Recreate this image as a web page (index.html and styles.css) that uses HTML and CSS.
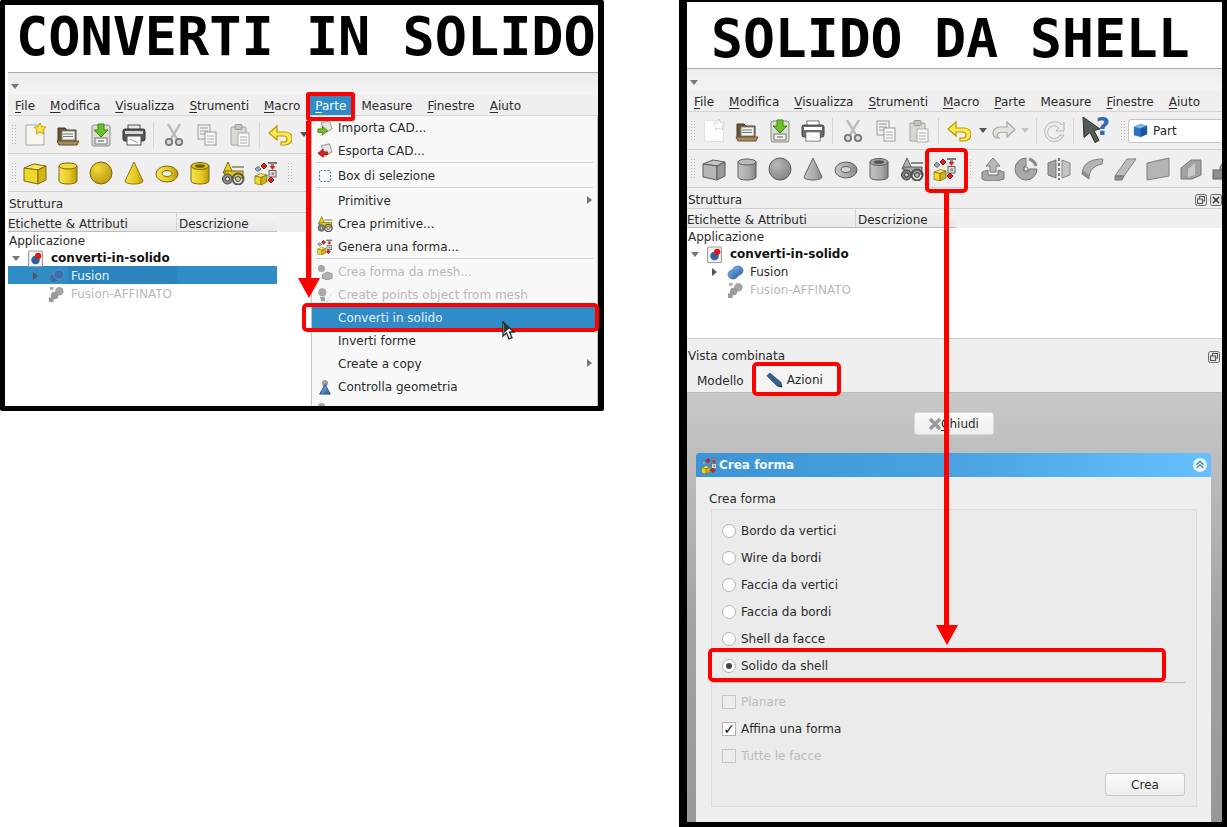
FILE: index.html
```html
<!DOCTYPE html>
<html lang="it">
<head>
<meta charset="utf-8">
<title>Converti in solido / Solido da shell</title>
<link rel="stylesheet" href="styles.css">
</head>
<body>
<svg class="defs" aria-hidden="true">
  <defs>
    <linearGradient id="gy" x1="0" x2="1" y1="0" y2="0"><stop offset="0" stop-color="#f7e45a"/><stop offset=".6" stop-color="#e6c81c"/><stop offset="1" stop-color="#b8980f"/></linearGradient>
    <radialGradient id="gs" cx=".35" cy=".3" r=".8"><stop offset="0" stop-color="#f4d93a"/><stop offset="1" stop-color="#b5950f"/></radialGradient>
    <linearGradient id="gb" x1="0" x2="1" y1="0" y2="1"><stop offset="0" stop-color="#7fb0e6"/><stop offset="1" stop-color="#2c62a8"/></linearGradient>
    <symbol id="i-new" viewBox="0 0 24 24"><path d="M3 2h13l5 5v15H3z" fill="#f6f5ef" stroke="#a9a79d"/><path d="M17 0l1.800 3.600 4 .5-2.900 2.800.7 4L17 9l-3.600 1.900.7-4-2.900-2.800 4-.5z" fill="#fce94f" stroke="#c4a000"/></symbol>
    <symbol id="i-open" viewBox="0 0 24 24"><path d="M2 5h7l2 2h9v13H2z" fill="#6b5232" stroke="#4a3820"/><rect x="6" y="8" width="13" height="9" fill="#f3f3ee" stroke="#888"/><path d="M7 11h10M7 13.500h10" stroke="#777"/><path d="M1 18h22l-2 4H3z" fill="#a58a5f" stroke="#6b5232"/></symbol>
    <symbol id="i-save" viewBox="0 0 24 24"><rect x="3" y="2" width="18" height="21" rx="2" fill="#dcdcd6" stroke="#8b8d85"/><rect x="6" y="15" width="12" height="6" fill="#f4f4f0" stroke="#777"/><path d="M9 18h6" stroke="#555"/><path d="M9 1h6v6h4l-7 7-7-7h4z" fill="#6cc02c" stroke="#3f8a0c"/></symbol>
    <symbol id="i-print" viewBox="0 0 24 24"><rect x="6" y="2" width="12" height="6" fill="#e8e8e8" stroke="#555"/><rect x="1" y="6" width="22" height="12" rx="2" fill="#55574f" stroke="#2e3436"/><rect x="3" y="8" width="18" height="3" fill="#d4d6d0"/><rect x="5" y="13" width="14" height="9" fill="#fafafa" stroke="#555"/><path d="M8 16l8 4" stroke="#7fb27f"/></symbol>
    <symbol id="i-cut" viewBox="0 0 24 24"><path d="M6 1l9 15M18 1L9 16" stroke="#b8bab4" stroke-width="2.400" fill="none"/><circle cx="7" cy="19" r="3.200" fill="#d8d8d8" stroke="#777" stroke-width="1.800"/><circle cx="17" cy="19" r="3.200" fill="#d8d8d8" stroke="#777" stroke-width="1.800"/></symbol>
    <symbol id="i-copy" viewBox="0 0 24 24"><rect x="3" y="2" width="12" height="14" fill="#f2f2ee" stroke="#999"/><path d="M5 5h8M5 8h8M5 11h8" stroke="#999"/><rect x="10" y="9" width="11" height="13" fill="#fafafa" stroke="#999"/><path d="M12 13h7M12 16h7M12 19h7" stroke="#aaa"/></symbol>
    <symbol id="i-paste" viewBox="0 0 24 24"><rect x="3" y="4" width="15" height="18" rx="1" fill="#d8d9d3" stroke="#a2a49c"/><rect x="7" y="1.500" width="7" height="5" rx="1" fill="#c4c5bf" stroke="#999"/><rect x="10" y="10" width="11" height="13" fill="#fbfbfb" stroke="#aaa"/><path d="M12 14h7M12 17h7M12 20h7" stroke="#aaa"/></symbol>
    <symbol id="i-undo" viewBox="0 0 24 24"><path d="M9 3L1 10l8 7v-4h6c3 0 4 1.500 4 3s-1 3-3 3h-3v3h4c4 0 7-3 7-6.500 0-4-3-6.500-7-6.500H9z" fill="#fce94f" stroke="#b89a00" stroke-width="1.200"/></symbol>
    <symbol id="i-redo" viewBox="0 0 24 24"><path d="M15 3l8 7.500L15 18v-4.500H9c-3 0-4 1.500-4 3s1 2.500 3 2.500H4C2 18 1 15.500 1 14c0-3.500 3-6 7-6h7z" fill="#e2e3df" stroke="#a8aaa4" stroke-width="1.200"/></symbol>
    <symbol id="i-refresh" viewBox="0 0 24 24"><path d="M19 6a10 10 0 1 0 2 10h-4a6.500 6.500 0 1 1-1-7l-3 3h8V3z" fill="#eeeeec" stroke="#b6b7b2"/></symbol>
    <symbol id="i-help" viewBox="0 0 30 30"><path d="M1 1l17 12-6 1.500 5 10-4 2-5-10-6 5z" fill="#555b57" stroke="#2e3436"/><text x="14" y="19" class="help-q">?</text></symbol>
    <symbol id="i-box" viewBox="0 0 24 24"><path d="M1 7l10-4 12 2-8 4z" fill="#f7e762" stroke="#7b6a0c"/><path d="M1 7l14 2v14L1 20z" fill="#efd62a" stroke="#7b6a0c"/><path d="M15 9l8-4v14l-8 4z" fill="#d2b514" stroke="#7b6a0c"/></symbol>
    <symbol id="i-cyl" viewBox="0 0 24 24"><path d="M3 5v15c0 4 18 4 18 0V5z" fill="url(#gy)" stroke="#7b6a0c"/><ellipse cx="12" cy="5" rx="9" ry="3" fill="#f3dc3c" stroke="#7b6a0c"/></symbol>
    <symbol id="i-sph" viewBox="0 0 24 24"><circle cx="12" cy="12" r="11" fill="url(#gs)" stroke="#7b6a0c"/></symbol>
    <symbol id="i-cone" viewBox="0 0 24 24"><path d="M12 1L3 20c0 4 18 4 18 0z" fill="url(#gy)" stroke="#8a7610"/></symbol>
    <symbol id="i-tor" viewBox="0 0 24 24"><ellipse cx="12" cy="13" rx="11" ry="8" fill="url(#gy)" stroke="#7b6a0c"/><ellipse cx="12" cy="12.500" rx="5" ry="3" fill="#f4f1d6" stroke="#7b6a0c"/></symbol>
    <symbol id="i-tube" viewBox="0 0 24 24"><path d="M3 5v15c0 4 18 4 18 0V5z" fill="url(#gy)" stroke="#7b6a0c"/><ellipse cx="12" cy="5" rx="9" ry="3.500" fill="#d9bd1c" stroke="#7b6a0c"/><ellipse cx="12" cy="5" rx="5" ry="1.800" fill="#6e5f10"/></symbol>
    <symbol id="i-prim" viewBox="0 0 24 24"><path d="M7 1L2 12h10z" fill="#eccf26" stroke="#7b6a0c"/><path d="M11 5h12v2H11z" fill="#9a9c96"/><rect x="4" y="10" width="18" height="7" fill="#e3c31a" stroke="#7b6a0c"/><circle cx="6.500" cy="18" r="5" fill="#8b8d88" stroke="#444"/><circle cx="6.500" cy="18" r="2" fill="#eee" stroke="#444"/><circle cx="17" cy="18" r="5.500" fill="none" stroke="#555" stroke-width="2"/><circle cx="17" cy="18" r="2.500" fill="#ccc" stroke="#444"/></symbol>
    <symbol id="i-build" viewBox="0 0 24 24"><path d="M1 15l6-2.500 6 1.500-6 2.500z" fill="#f8ea6a" stroke="#7b6a0c" stroke-width=".7"/><path d="M1 15l6 1.500V24l-6-1.500z" fill="#f0d82e" stroke="#7b6a0c" stroke-width=".7"/><path d="M7 16.500l6-2.500v7l-6 3z" fill="#cdb11a" stroke="#7b6a0c" stroke-width=".7"/><path d="M1 8l3-2.500L7 8l-3 2.500z" fill="#9ab0c9" stroke="#666"/><path d="M7 5l3-3 3 3-3 3z" fill="#e02020" stroke="#911"/><path d="M14 1h9v2h-9z" fill="#777"/><path d="M17 2h3v3h-3z" fill="#888"/><path d="M15.500 5h6l-3 4z" fill="#e02020"/><rect x="15" y="9.500" width="7" height="6.500" fill="#ddd" stroke="#666"/><rect x="17.500" y="11.500" width="2.500" height="2.500" fill="#888"/><path d="M14 19l3-3 3 3-3 3z" fill="#e02020" stroke="#911"/></symbol>
    <symbol id="i-extr" viewBox="0 0 24 24"><path d="M12 1l7 8h-4v6H9V9H5z" fill="#b9b9b9" stroke="#7a7a7a"/><path d="M1 15l6-2v5h10v-5l6 2v7l-8 2H6l-5-2z" fill="#a7a7a7" stroke="#777"/></symbol>
    <symbol id="i-rev" viewBox="0 0 24 24"><path d="M12 1a11 11 0 1 0 11 11H15a3 3 0 1 1-3-3z" fill="#a9a9a9" stroke="#777"/><path d="M15 2a10 10 0 0 1 7 7" fill="none" stroke="#888" stroke-width="3"/><circle cx="12" cy="12" r="2" fill="#eee" stroke="#777"/></symbol>
    <symbol id="i-mir" viewBox="0 0 24 24"><path d="M1 6l8-3v18l-8-3z" fill="#a4a4a4" stroke="#777"/><path d="M23 6l-8-3v18l8-3z" fill="#c4c4c4" stroke="#888"/><path d="M12 1v22" stroke="#777" stroke-width="2" stroke-dasharray="3 2"/></symbol>
    <symbol id="i-fil" viewBox="0 0 24 24"><path d="M23 2C12 2 3 5 2 17l7 5c0-8 4-13 13-15z" fill="#b4b4b4" stroke="#808080"/><path d="M2 17l7 5v-4l-7-5z" fill="#8e8e8e"/></symbol>
    <symbol id="i-cham" viewBox="0 0 24 24"><path d="M14 2h9L11 19H2z" fill="#bdbdbd" stroke="#808080"/><path d="M2 19h9l-2 4H2z" fill="#8e8e8e" stroke="#777"/></symbol>
    <symbol id="i-ruled" viewBox="0 0 24 24"><path d="M1 6l22-5v18L1 23z" fill="#b4b4b4" stroke="#808080"/></symbol>
    <symbol id="i-loft" viewBox="0 0 24 24"><path d="M2 11l10-8h10v15l-9 4H2z" fill="#a2a2a2" stroke="#777"/><path d="M9 12l7-6v12l-7 2z" fill="#c9c9c9"/></symbol>
    <symbol id="i-sweep" viewBox="0 0 24 24"><path d="M8 22V10l6-9h10v12H14v6z" fill="#a4a4a4" stroke="#777"/><rect x="1" y="13" width="10" height="9" fill="#8e8e8e" stroke="#666"/></symbol>
    <symbol id="i-imp" viewBox="0 0 18 18"><path d="M5 3l9-2 3 9-9 5z" fill="#e4e4e0" stroke="#8a8a85"/><path d="M1 10h5V7l6 5-6 5v-3H1z" fill="#78b828" stroke="#4e8a10"/></symbol>
    <symbol id="i-exp" viewBox="0 0 18 18"><path d="M5 3l9-2 3 9-9 5z" fill="#e4e4e0" stroke="#8a8a85"/><path d="M12 10H7V7l-6 4.500L7 16v-3h5z" fill="#e02020" stroke="#a01010"/></symbol>
    <symbol id="i-sel" viewBox="0 0 16 16"><rect x="2.500" y="2.500" width="11" height="11" rx="1" fill="none" stroke="#4a7fc0" stroke-width="1.200" stroke-dasharray="2 1.500"/></symbol>
    <symbol id="i-mesh" viewBox="0 0 18 18"><circle cx="5" cy="5" r="4" fill="#a6a6a6"/><path d="M6 12l5-3 6 2v5l-5 2-6-2z" fill="#b2b2b2" stroke="#909090"/></symbol>
    <symbol id="i-pts" viewBox="0 0 18 18"><circle cx="6" cy="6" r="4.500" fill="#a6a6a6"/><path d="M3 11h6v5H5z" fill="#a0a0a0"/><path d="M12 12h1M15 10h1M14 15h1M11 16h1" stroke="#bbb" stroke-width="1.500"/></symbol>
    <symbol id="i-chk" viewBox="0 0 18 18"><circle cx="9" cy="4.500" r="3.500" fill="#9a9fa8"/><path d="M9 6l6 11H3z" fill="url(#gb)" stroke="#2c4f85"/></symbol>
    <symbol id="i-doc" viewBox="0 0 16 16"><rect x="1.500" y="1" width="13" height="14.500" rx="1" fill="#f4f4f2" stroke="#9a9a9a"/><circle cx="8" cy="9.500" r="4" fill="#2d5f9e"/><circle cx="10.500" cy="5.500" r="3" fill="#e01818"/></symbol>
    <symbol id="i-fus" viewBox="0 0 18 18"><ellipse cx="6.500" cy="11" rx="5.500" ry="5" fill="url(#gb)" stroke="#3a6aa5" stroke-width=".6"/><ellipse cx="11.500" cy="7" rx="5.500" ry="5" fill="url(#gb)" stroke="#3a6aa5" stroke-width=".6"/></symbol>
    <symbol id="i-fus-sel" viewBox="0 0 18 18"><ellipse cx="6.500" cy="11" rx="5.500" ry="5" fill="#3a6fae" stroke="#6a99cc" stroke-width=".8"/><ellipse cx="11.500" cy="7" rx="5.500" ry="5" fill="#3a6fae" stroke="#6a99cc" stroke-width=".8"/></symbol>
    <symbol id="i-aff" viewBox="0 0 18 18"><rect x="2" y="1" width="4" height="3" fill="#aaa"/><circle cx="12" cy="5.500" r="4.500" fill="#a4a4a4"/><circle cx="7" cy="10" r="4" fill="#9a9a9a"/><rect x="1" y="12" width="5" height="5" fill="#999"/></symbol>
    <symbol id="i-part" viewBox="0 0 18 18"><path d="M2 5l7-3 7 2v9l-7 3-7-2z" fill="#2d72c4"/><path d="M2 5l7 2 7-3-7-2z" fill="#7db3ea"/><path d="M9 7l7-3v9l-7 3z" fill="#1c55a0"/></symbol>
    <symbol id="i-pencil" viewBox="0 0 18 18"><path d="M1 4l3-3 12 10 1 5-5-1z" fill="#34608f" stroke="#1e3f66" stroke-width=".7"/><path d="M14 15.500l2.500.7-.7-2.500z" fill="#222"/></symbol>
    <symbol id="i-float" viewBox="0 0 12 12"><rect x=".5" y=".5" width="11" height="11" rx="2" fill="#e4e4e4" stroke="#6c6c6c"/><rect x="4.500" y="2.500" width="5" height="4.500" fill="none" stroke="#555"/><rect x="2.500" y="5" width="5" height="4.500" fill="#e4e4e4" stroke="#555"/></symbol>
    <symbol id="i-close" viewBox="0 0 12 12"><rect x=".5" y=".5" width="11" height="11" rx="2" fill="#e4e4e4" stroke="#6c6c6c"/><path d="M3 3l6 6M9 3l-6 6" stroke="#333" stroke-width="1.500"/></symbol>
    <symbol id="i-x" viewBox="0 0 14 14"><path d="M2 2l10 10M12 2L2 12" stroke="#9a9a9a" stroke-width="3.400"/></symbol>
    <symbol id="i-chev" viewBox="0 0 14 14"><circle cx="7" cy="7" r="7" fill="#eef6fc"/><path d="M3.500 6.500L7 3.500l3.500 3M3.500 10L7 7l3.500 3" fill="none" stroke="#3f8ed0" stroke-width="1.500"/></symbol>
    <symbol id="i-cursor" viewBox="0 0 14 20"><path d="M1 1v14l3.500-3 2.500 6 3-1.300-2.500-5.700H12z" fill="#fff" stroke="#222" stroke-width="1.300"/><path d="M2 2v10l6-5z" fill="#333"/></symbol>
  </defs>
</svg>

<section class="shot shot-left">
  <h1 class="shot-title title-left">CONVERTI IN SOLIDO</h1>
  <div class="app app-left">
    <div class="collapse-bar"><span class="caret-down"></span></div>
    <nav class="menubar">
      <span class="menu-item"><u>F</u>ile</span><span class="menu-item"><u>M</u>odifica</span><span class="menu-item"><u>V</u>isualizza</span><span class="menu-item"><u>S</u>trumenti</span><span class="menu-item"><u>M</u>acro</span><span class="menu-item menu-active"><u>P</u>arte</span><span class="menu-item">Measure</span><span class="menu-item"><u>F</u>inestre</span><span class="menu-item"><u>A</u>iuto</span>
    </nav>
    <div class="toolbar">
      <span class="grip"></span>
      <span class="tool"><svg class="ic"><use href="#i-new"/></svg></span>
      <span class="tool"><svg class="ic"><use href="#i-open"/></svg></span>
      <span class="tool"><svg class="ic"><use href="#i-save"/></svg></span>
      <span class="tool"><svg class="ic"><use href="#i-print"/></svg></span>
      <span class="tool-sep"></span>
      <span class="tool"><svg class="ic"><use href="#i-cut"/></svg></span>
      <span class="tool"><svg class="ic"><use href="#i-copy"/></svg></span>
      <span class="tool"><svg class="ic"><use href="#i-paste"/></svg></span>
      <span class="tool-sep"></span>
      <span class="tool"><svg class="ic"><use href="#i-undo"/></svg></span>
      <span class="drop"></span>
    </div>
    <div class="toolbar">
      <span class="grip"></span>
      <span class="tool"><svg class="ic"><use href="#i-box"/></svg></span>
      <span class="tool"><svg class="ic"><use href="#i-cyl"/></svg></span>
      <span class="tool"><svg class="ic"><use href="#i-sph"/></svg></span>
      <span class="tool"><svg class="ic"><use href="#i-cone"/></svg></span>
      <span class="tool"><svg class="ic"><use href="#i-tor"/></svg></span>
      <span class="tool"><svg class="ic"><use href="#i-tube"/></svg></span>
      <span class="tool"><svg class="ic"><use href="#i-prim"/></svg></span>
      <span class="tool"><svg class="ic"><use href="#i-build"/></svg></span>
      <span class="grip grip-after"></span>
    </div>
    <div class="dock-title"><span>Struttura</span></div>
    <div class="tree-head"><span class="col col-label">Etichette &amp; Attributi</span><span class="col col-desc">Descrizione</span></div>
    <div class="tree tree-left">
      <div class="tree-row tree-root">Applicazione</div>
      <div class="tree-row tree-doc"><span class="twist-down"></span><svg class="ic-s"><use href="#i-doc"/></svg><b>converti-in-solido</b></div>
      <div class="tree-row tree-item tree-selected"><span class="twist-right"></span><svg class="ic-s"><use href="#i-fus-sel"/></svg><span class="cell-sel">Fusion</span></div>
      <div class="tree-row tree-item tree-muted"><span class="twist-none"></span><svg class="ic-s"><use href="#i-aff"/></svg><span>Fusion-AFFINATO</span></div>
    </div>
    <div class="popup">
      <div class="pop-row"><svg class="ic-m"><use href="#i-imp"/></svg>Importa CAD...</div>
      <div class="pop-row"><svg class="ic-m"><use href="#i-exp"/></svg>Esporta CAD...</div>
      <div class="pop-sep"></div>
      <div class="pop-row"><svg class="ic-m"><use href="#i-sel"/></svg>Box di selezione</div>
      <div class="pop-sep"></div>
      <div class="pop-row"><span class="ic-m"></span>Primitive<span class="sub-arrow"></span></div>
      <div class="pop-row"><svg class="ic-m"><use href="#i-prim"/></svg>Crea primitive...</div>
      <div class="pop-row"><svg class="ic-m"><use href="#i-build"/></svg>Genera una forma...</div>
      <div class="pop-sep"></div>
      <div class="pop-row pop-off"><svg class="ic-m"><use href="#i-mesh"/></svg>Crea forma da mesh...</div>
      <div class="pop-row pop-off"><svg class="ic-m"><use href="#i-pts"/></svg>Create points object from mesh</div>
      <div class="pop-row pop-on"><span class="ic-m"></span>Converti in solido</div>
      <div class="pop-row"><span class="ic-m"></span>Inverti forme</div>
      <div class="pop-row"><span class="ic-m"></span>Create a copy<span class="sub-arrow"></span></div>
      <div class="pop-row"><svg class="ic-m"><use href="#i-chk"/></svg>Controlla geometria</div>
      <div class="pop-row pop-off"><svg class="ic-m"><use href="#i-mesh"/></svg></div>
    </div>
  </div>
</section>

<section class="shot shot-right">
  <h1 class="shot-title title-right">SOLIDO DA SHELL</h1>
  <div class="app app-right">
    <div class="collapse-bar"><span class="caret-down"></span></div>
    <nav class="menubar">
      <span class="menu-item"><u>F</u>ile</span><span class="menu-item"><u>M</u>odifica</span><span class="menu-item"><u>V</u>isualizza</span><span class="menu-item"><u>S</u>trumenti</span><span class="menu-item"><u>M</u>acro</span><span class="menu-item"><u>P</u>arte</span><span class="menu-item">Measure</span><span class="menu-item"><u>F</u>inestre</span><span class="menu-item"><u>A</u>iuto</span>
    </nav>
    <div class="toolbar">
      <span class="grip"></span>
      <span class="tool off-light"><svg class="ic"><use href="#i-new"/></svg></span>
      <span class="tool"><svg class="ic"><use href="#i-open"/></svg></span>
      <span class="tool"><svg class="ic"><use href="#i-save"/></svg></span>
      <span class="tool off-light"><svg class="ic"><use href="#i-print"/></svg></span>
      <span class="tool-sep"></span>
      <span class="tool"><svg class="ic"><use href="#i-cut"/></svg></span>
      <span class="tool"><svg class="ic"><use href="#i-copy"/></svg></span>
      <span class="tool"><svg class="ic"><use href="#i-paste"/></svg></span>
      <span class="tool-sep"></span>
      <span class="tool"><svg class="ic"><use href="#i-undo"/></svg></span>
      <span class="drop"></span>
      <span class="tool tool-narrow"><svg class="ic"><use href="#i-redo"/></svg></span>
      <span class="drop drop-off"></span>
      <span class="tool-sep"></span>
      <span class="tool tool-refresh"><svg class="ic"><use href="#i-refresh"/></svg></span>
      <span class="tool-sep"></span>
      <span class="tool tool-help"><svg class="ic-l"><use href="#i-help"/></svg></span>
      <span class="grip grip-combo"></span>
      <span class="combo"><svg class="ic-s"><use href="#i-part"/></svg>Part</span>
    </div>
    <div class="toolbar">
      <span class="grip"></span>
      <span class="tool off"><svg class="ic"><use href="#i-box"/></svg></span>
      <span class="tool off"><svg class="ic"><use href="#i-cyl"/></svg></span>
      <span class="tool off"><svg class="ic"><use href="#i-sph"/></svg></span>
      <span class="tool off"><svg class="ic"><use href="#i-cone"/></svg></span>
      <span class="tool off"><svg class="ic"><use href="#i-tor"/></svg></span>
      <span class="tool off"><svg class="ic"><use href="#i-tube"/></svg></span>
      <span class="tool off"><svg class="ic"><use href="#i-prim"/></svg></span>
      <span class="tool"><svg class="ic"><use href="#i-build"/></svg></span>
      <span class="grip grip-after"></span>
      <span class="tool"><svg class="ic"><use href="#i-extr"/></svg></span>
      <span class="tool"><svg class="ic"><use href="#i-rev"/></svg></span>
      <span class="tool"><svg class="ic"><use href="#i-mir"/></svg></span>
      <span class="tool"><svg class="ic"><use href="#i-fil"/></svg></span>
      <span class="tool"><svg class="ic"><use href="#i-cham"/></svg></span>
      <span class="tool"><svg class="ic"><use href="#i-ruled"/></svg></span>
      <span class="tool"><svg class="ic"><use href="#i-loft"/></svg></span>
      <span class="tool"><svg class="ic"><use href="#i-sweep"/></svg></span>
    </div>
    <div class="dock-title"><span>Struttura</span><span class="dock-btns"><svg class="ic-xs"><use href="#i-float"/></svg><svg class="ic-xs"><use href="#i-close"/></svg></span></div>
    <div class="tree-head"><span class="col col-label">Etichette &amp; Attributi</span><span class="col col-desc">Descrizione</span></div>
    <div class="tree tree-right">
      <div class="tree-row tree-root">Applicazione</div>
      <div class="tree-row tree-doc"><span class="twist-down"></span><svg class="ic-s"><use href="#i-doc"/></svg><b>converti-in-solido</b></div>
      <div class="tree-row tree-item"><span class="twist-right"></span><svg class="ic-s"><use href="#i-fus"/></svg><span>Fusion</span></div>
      <div class="tree-row tree-item tree-muted"><span class="twist-none"></span><svg class="ic-s"><use href="#i-aff"/></svg><span>Fusion-AFFINATO</span></div>
    </div>
    <div class="combined-title"><span>Vista combinata</span><svg class="ic-xs"><use href="#i-float"/></svg></div>
    <div class="tabs">
      <span class="tab">Modello</span>
      <span class="tab tab-on"><svg class="ic-s"><use href="#i-pencil"/></svg>Azioni</span>
    </div>
    <div class="task-area">
      <div class="task-actions"><button class="btn btn-close" type="button"><svg class="ic-b"><use href="#i-x"/></svg><span><u>C</u>hiudi</span></button></div>
      <div class="task-box">
        <div class="task-head"><svg class="ic-s"><use href="#i-build"/></svg><b>Crea forma</b><svg class="ic-b chev"><use href="#i-chev"/></svg></div>
        <div class="task-body">
          <div class="group-label">Crea forma</div>
          <div class="group">
            <label class="opt"><span class="radio"></span>Bordo da vertici</label>
            <label class="opt"><span class="radio"></span>Wire da bordi</label>
            <label class="opt"><span class="radio"></span>Faccia da vertici</label>
            <label class="opt"><span class="radio"></span>Faccia da bordi</label>
            <label class="opt"><span class="radio"></span>Shell da facce</label>
            <label class="opt"><span class="radio radio-on"></span>Solido da shell</label>
            <div class="rule"></div>
            <label class="opt opt-check opt-off"><span class="check"></span>Planare</label>
            <label class="opt opt-check"><span class="check check-on">✓</span>Affina una forma</label>
            <label class="opt opt-check opt-off"><span class="check"></span>Tutte le facce</label>
            <div class="group-foot"><button class="btn btn-make" type="button">Crea</button></div>
          </div>
        </div>
      </div>
    </div>
  </div>
</section>

<div class="mark mark-parte"></div>
<div class="arrow arrow-left"><span class="arrow-shaft"></span><span class="arrow-head"></span></div>
<div class="mark mark-converti"></div>
<svg class="cursor"><use href="#i-cursor"/></svg>

<div class="mark mark-build"></div>
<div class="arrow arrow-right"><span class="arrow-shaft"></span><span class="arrow-head"></span></div>
<div class="mark mark-azioni"></div>
<div class="mark mark-solido"></div>
</body>
</html>
```

FILE: styles.css
```css
* { box-sizing: border-box; }
html, body { margin: 0; padding: 0; }
body {
  position: relative;
  width: 1227px;
  height: 827px;
  overflow: hidden;
  background: #fff;
  font: 12px "DejaVu Sans", sans-serif;
  color: #2a2a2a;
}
.defs { position: absolute; width: 0; height: 0; }
u { text-underline-offset: 2px; text-decoration-thickness: 1px; }

/* Two screenshots laid on a free canvas */
.shot {
  position: absolute;
  background: #fff;
  border-style: solid;
  border-color: #000;
  overflow: hidden;
  display: flex;
  flex-direction: column;
}
.shot-left { left: 0; top: 0; width: 604px; height: 411px; border-width: 5px 6px 5px 5px; border-radius: 2px; }
.shot-right { left: 679px; top: 0; width: 548px; height: 827px; border-width: 2px 5px 5px 8px; }

.shot-title {
  margin: 0;
  flex: none;
  font: bold 53px/1 "DejaVu Sans Mono", monospace;
  color: #000;
  white-space: pre;
  display: flex;
  align-items: center;
}
.title-left { height: 67px; padding: 0 0 4px 11px; font-size: 53.5px; }
.title-right { height: 66px; padding: 6px 0 0 24px; }

.app {
  position: relative;
  flex: 1;
  min-height: 0;
  display: flex;
  flex-direction: column;
  background: #efefef;
  border-top: 1px solid #aaa;
}
.app-left { margin-left: 3px; }

.collapse-bar { height: 22px; flex: none; background: linear-gradient(#ececec, #f4f4f4); padding: 11px 0 0 3px; }
.caret-down { display: block; width: 0; height: 0; border: 4px solid transparent; border-top: 5px solid #777; border-bottom: 0; }

.menubar { height: 21px; flex: none; display: flex; align-items: center; padding-top: 1px; border-bottom: 1px solid #d4d4d4; }
.menu-item { padding: 0 7px; margin-right: 1px; height: 19px; line-height: 20px; white-space: nowrap; }
.menu-active { background: #308cc6; color: #fff; }

.toolbar { height: 38px; flex: none; display: flex; align-items: center; padding-left: 3px; border-bottom: 1px solid #cfcfcf; white-space: nowrap; }
.grip { width: 5px; height: 22px; flex: none; margin-right: 2px; background: radial-gradient(circle, #b5b5b5 .7px, transparent 1px) 0 0 / 3px 3px; }
.grip-after { margin: 0 5px 0 5px; }
.grip-combo { margin: 0 3px 0 7px; }
.tool { width: 33px; height: 30px; flex: none; display: flex; align-items: center; justify-content: center; }
.tool-narrow { width: 26px; }
.tool-refresh { width: 30px; }
.tool-help { margin-left: 3px; }
.tool.off svg { filter: grayscale(1) brightness(.88); }
.tool.off-light svg { filter: grayscale(1) brightness(1.25); }
.tool-sep { width: 1px; height: 26px; flex: none; margin: 0 3px 0 3px; background: #d5d5d5; }
.drop { width: 0; height: 0; flex: none; margin: 0 4px; border: 4px solid transparent; border-top: 5px solid #555; border-bottom: 0; }
.drop-off { border-top-color: #c4c4c4; }
.ic { width: 24px; height: 24px; }
.ic-l { width: 30px; height: 30px; }
.ic-s { width: 17px; height: 17px; flex: none; }
.ic-m { width: 16px; height: 16px; flex: none; display: block; }
.ic-xs { width: 12px; height: 12px; flex: none; display: block; }
.ic-b { width: 14px; height: 14px; flex: none; }
.help-q { font: bold 24px "DejaVu Sans", sans-serif; fill: #2f6cb3; }

.combo { width: 100px; height: 24px; flex: none; display: flex; align-items: center; gap: 4px; padding-left: 3px; background: #fff; border: 1px solid #c4c4c4; border-radius: 3px; }

.dock-title { height: 21px; flex: none; display: flex; align-items: center; justify-content: space-between; padding: 3px 0 0 1px; border-bottom: 1px solid #cfcfcf; }
.dock-title > span:first-child { padding-top: 1px; }
.dock-btns { display: flex; gap: 3px; }

.tree-head { height: 19px; flex: none; display: flex; background: #efefef; }
.col { height: 19px; line-height: 23px; white-space: nowrap; background: linear-gradient(#f2f2f2, #e9e9e9); border-bottom: 1px solid #bdbdbd; }
.col-label { width: 169px; border-right: 1px solid #d2d2d2; }
.col-desc { width: 100px; padding-left: 2px; }

.tree { background: #fff; flex: none; }
.tree-left { flex: 1; }
.tree-right { height: 111px; border-bottom: 1px solid #cfcfcf; }
.tree-row { width: 269px; height: 18px; display: flex; align-items: center; white-space: nowrap; }
.tree-root { height: 16px; padding: 1px 0 0 1px; }
.tree-doc { padding: 2px 0 0 4px; }
.tree-doc b { margin-left: 7px; color: #111; }
.tree-item { padding: 2px 0 0 25px; }
.tree-item .ic-s { margin-left: 10px; margin-right: 6px; }
.tree-doc .ic-s { margin-left: 7px; }
.tree-muted { color: #b8b8b8; }
.tree-selected { background: #308cc6; color: #e8f2f9; }
.cell-sel { align-self: stretch; width: 109px; padding-left: 3px; line-height: 20px; background: #2a84bd; margin: -2px 0 0 -3px; }
.twist-down { width: 0; height: 0; border: 4px solid transparent; border-top: 5px solid #777; border-bottom: 0; }
.twist-right { width: 0; height: 0; border: 4px solid transparent; border-left: 5px solid #555; border-right: 0; }
.twist-none { width: 5px; }

/* Open menu lying over the app */
.popup { position: absolute; left: 303px; top: 42px; width: 287px; bottom: 0; overflow: hidden; background: #f8f8f8; border: 1px solid #c2c2c2; border-bottom: 0; border-top-color: #d8d8d8; }
.pop-row { position: relative; height: 23px; display: flex; align-items: center; gap: 5px; padding-left: 5px; white-space: nowrap; }
.pop-sep { height: 2px; margin: 0 4px; border-top: 1px solid #d0d0d0; border-bottom: 1px solid #fff; }
.pop-off { color: #b9b9b9; }
.pop-on { background: #308cc6; color: #e8f2f9; }
.sub-arrow { position: absolute; right: 5px; top: 7px; width: 0; height: 0; border: 4px solid transparent; border-left: 5px solid #777; border-right: 0; }

.combined-title { height: 26px; flex: none; display: flex; align-items: flex-end; justify-content: space-between; padding: 0 2px 2px 1px; }
.tabs { height: 28px; flex: none; display: flex; align-items: stretch; padding-left: 3px; border-bottom: 1px solid #bcbcbc; }
.tab { display: flex; align-items: center; gap: 4px; padding: 4px 7px 0; }
.tab-on { margin-left: 4px; padding: 3px 15px 0 11px; background: #f4f4f4; }

.task-area { flex: 1; min-height: 0; overflow: hidden; padding: 19px 11px 0 9px; background: linear-gradient(#c8c8c8, #a2a2a2 55%, #989898); display: flex; flex-direction: column; }
.task-actions { flex: none; display: flex; justify-content: center; margin-bottom: 18px; }
.btn { font: inherit; color: #2a2a2a; background: linear-gradient(#fbfbfb, #ececec); border: 1px solid #c8c8c8; border-radius: 3px; padding: 0; height: 23px; display: inline-flex; align-items: center; justify-content: center; }
.btn-close { width: 80px; gap: 0; border-color: #d8d8d8; background: linear-gradient(#f9f9f9, #efefef); }
.btn-close .ic-b { margin-right: -1px; }
.btn-make { width: 80px; }

.task-box { flex: 1; min-height: 0; display: flex; flex-direction: column; background: #eee; border-radius: 3px 3px 0 0; }
.task-head { height: 24px; flex: none; display: flex; align-items: center; gap: 1px; padding: 0 4px 0 5px; border-radius: 3px 3px 0 0; color: #f2f8fc; background: linear-gradient(90deg, #3a94d6, #4aa3e0 50%, #66bfff); }
.chev { margin-left: auto; }
.task-body { flex: 1; padding: 13px 14px 0 13px; }
.group-label { height: 18px; line-height: 18px; margin-bottom: 1px; }
.group { margin-left: 2px; height: 298px; padding: 7px 11px 0 10px; background: #ebebeb; border: 1px solid #dcdcdc; }
.opt { height: 27px; display: flex; align-items: center; gap: 5px; white-space: nowrap; }
.radio { position: relative; width: 14px; height: 14px; flex: none; border-radius: 50%; background: #fff; border: 1px solid #b4b4b4; }
.radio-on::after { content: ""; position: absolute; left: 3px; top: 3px; width: 6px; height: 6px; border-radius: 50%; background: #444; }
.rule { height: 1px; margin: 3px 0 5px -10px; background: #bdbdbd; }
.check { width: 14px; height: 14px; flex: none; background: #f6f6f6; border: 1px solid #c6c6c6; font: bold 14px/12px "DejaVu Sans", sans-serif; color: #111; text-align: center; }
.check-on { background: #fff; border-color: #b4b4b4; }
.opt-off { color: #bbb; }
.opt-off .check { background: #ececec; }
.group-foot { display: flex; justify-content: flex-end; margin-top: 4px; }

/* Red annotations drawn over the screenshots */
.mark { position: absolute; border: 4px solid #f00; border-radius: 5px; }
.mark-parte { left: 306px; top: 92px; width: 49px; height: 29px; border-radius: 3px; }
.mark-converti { left: 302px; top: 303px; width: 297px; height: 29px; }
.mark-build { left: 925px; top: 148px; width: 43px; height: 45px; }
.mark-azioni { left: 752px; top: 362px; width: 89px; height: 34px; }
.mark-solido { left: 708px; top: 648px; width: 458px; height: 34px; }
.arrow { position: absolute; display: flex; flex-direction: column; align-items: center; }
.arrow-left { left: 297px; top: 121px; width: 23px; height: 177px; }
.arrow-right { left: 935px; top: 193px; width: 23px; height: 452px; }
.arrow-shaft { flex: 1; width: 5px; background: #f00; }
.arrow-head { flex: none; width: 0; height: 0; border-left: 11.5px solid transparent; border-right: 11.5px solid transparent; border-top: 20px solid #f00; }
.cursor { position: absolute; left: 502px; top: 321px; width: 14px; height: 20px; }
```
